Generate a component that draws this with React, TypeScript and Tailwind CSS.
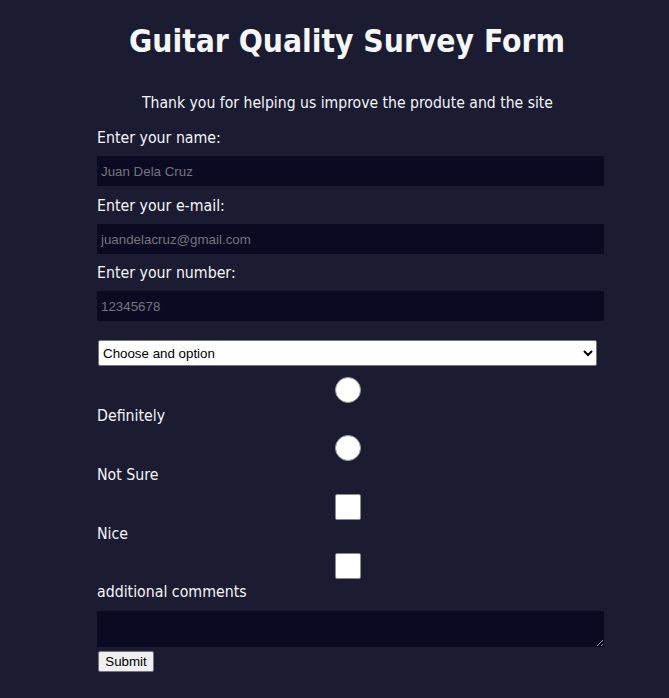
import React from "react";

export default function App() {
  const label = "block h-[20px] leading-[20px] text-[15.75px]";
  const field =
    "block w-full h-[30px] bg-[#0a0a23] border-0 outline-none px-[4px] text-[13.33px] text-[#dfdfe2] placeholder:text-[#75757f] font-['Liberation_Sans',Arial,sans-serif]";
  const radio =
    "block appearance-none w-[26px] h-[26px] rounded-full bg-white border border-[#9a9a9a] m-0";
  const check =
    "block appearance-none w-[26px] h-[26px] rounded-[2px] bg-white border border-[#8a8a8a] m-0";
  return (
    <div className="min-h-screen bg-[#1b1b32] text-[#f5f6f7] font-['DejaVu_Sans_Condensed','DejaVu_Sans',sans-serif] pb-[26px]">
      <div className="ml-[97px] w-[507px] pt-[22px]">
        <h1 className="text-center text-[31.5px] leading-[38px] font-bold pr-[7px]">
          Guitar Quality Survey Form
        </h1>
        <p className="mt-[33px] text-center text-[15.6px] leading-[20px] pr-[6px]">
          Thank you for helping us improve the produte and the site
        </p>
        <form className="mt-[15px]">
          <label className={label} htmlFor="name">Enter your name:</label>
          <input id="name" type="text" placeholder="Juan Dela Cruz" className={`${field} mt-[8px]`} />
          <label className={`${label} mt-[10px]`} htmlFor="email">Enter your e-mail:</label>
          <input id="email" type="email" placeholder="juandelacruz@gmail.com" className={`${field} mt-[8px]`} />
          <label className={`${label} mt-[9px]`} htmlFor="number">Enter your number:</label>
          <input id="number" type="text" placeholder="12345678" className={`${field} mt-[8px]`} />
          <select
            defaultValue=""
            className="block mt-[19px] ml-[1px] w-[499px] h-[26px] bg-white text-black border border-[#767676] rounded-[2px] text-[13.33px] px-0 font-['Liberation_Sans',Arial,sans-serif]"
          >
            <option value="">Choose and option</option>
            <option value="good">Good</option>
            <option value="bad">Bad</option>
          </select>
          <div className="mt-[11px] flex justify-center pr-[5px]">
            <input type="radio" name="q" className={radio} aria-label="Definitely" />
          </div>
          <div className={`${label} mt-[3px]`}>Definitely</div>
          <div className="mt-[9px] flex justify-center pr-[5px]">
            <input type="radio" name="q" className={radio} aria-label="Not Sure" />
          </div>
          <div className={`${label} mt-[4px]`}>Not Sure</div>
          <div className="mt-[9px] flex justify-center pr-[5px]">
            <input type="checkbox" className={check} aria-label="Nice" />
          </div>
          <div className={`${label} mt-[4px]`}>Nice</div>
          <div className="mt-[9px] flex justify-center pr-[5px]">
            <input type="checkbox" className={check} aria-label="additional" />
          </div>
          <div className={`${label} mt-[3px]`}>additional comments</div>
          <textarea className="block mt-[9px] w-full h-[36px] bg-[#0a0a23] border-0 outline-none text-[13.33px] text-white" />
          <button
            type="button"
            className="block mt-[4px] ml-[1px] h-[21px] w-[56px] bg-[#efefef] text-black border border-[#767676] rounded-[2px] text-[13.33px] leading-[17px] font-['Liberation_Sans',Arial,sans-serif]"
          >
            Submit
          </button>
        </form>
      </div>
    </div>
  );
}
